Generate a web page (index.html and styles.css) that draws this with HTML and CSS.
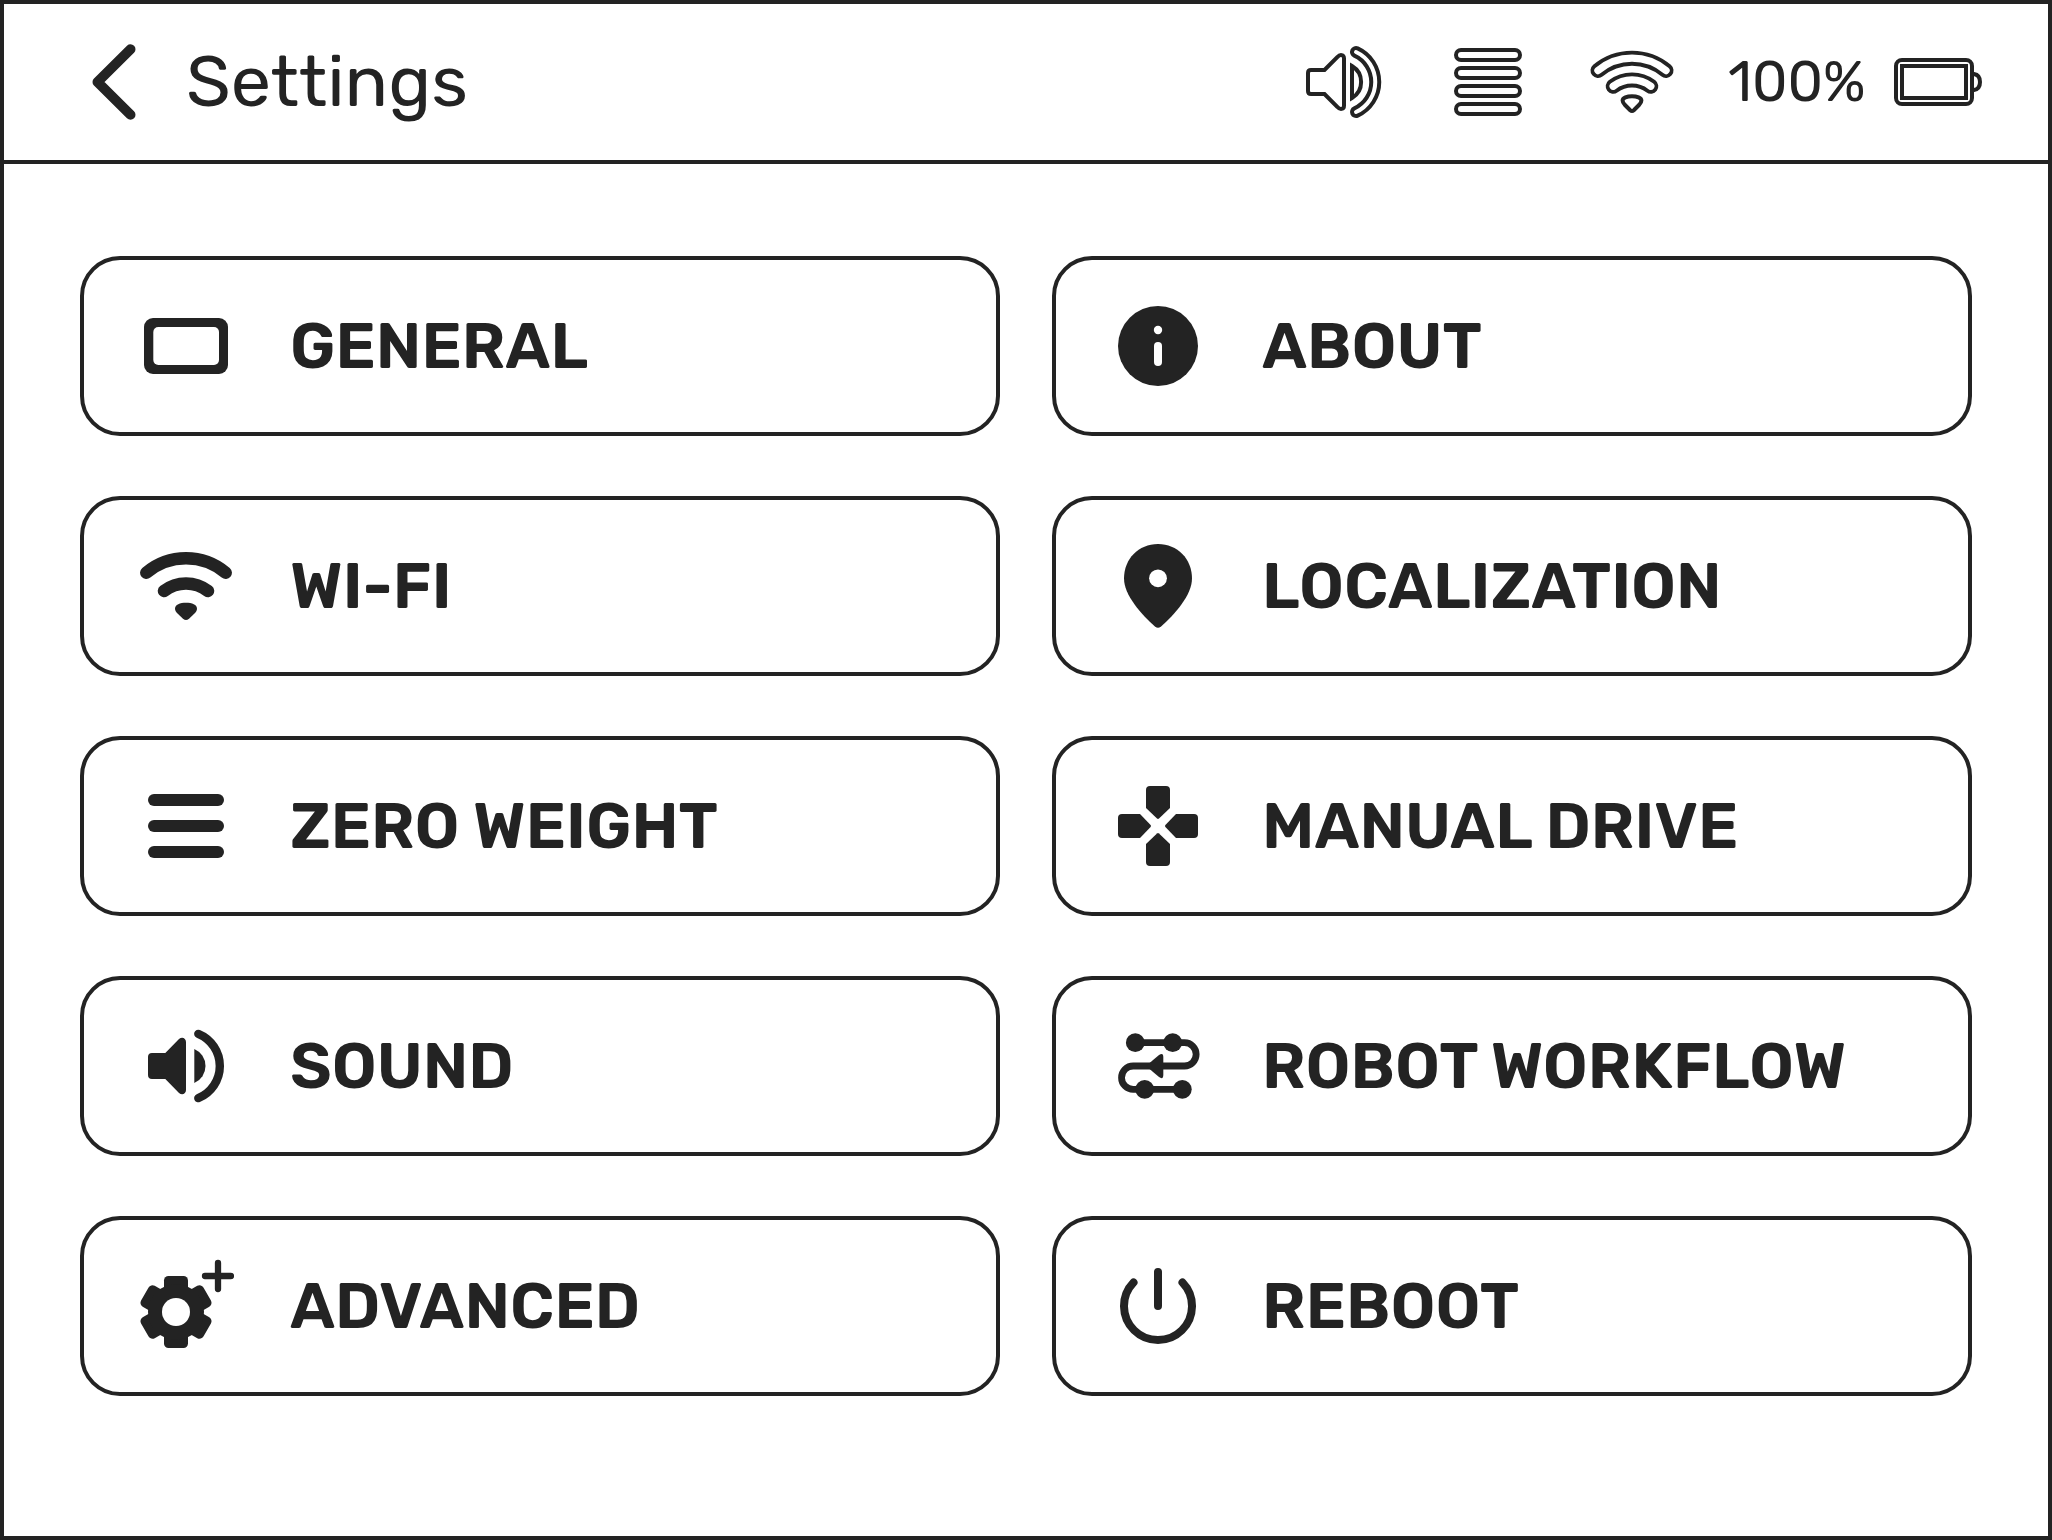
FILE: index.html
```html
<!DOCTYPE html>
<html lang="en">

<head>
  <meta charset="UTF-8">
  <meta name="viewport" content="width=device-width, initial-scale=1">
  <title>Settings</title>
  <link rel="stylesheet" href="styles.css">
</head>

<body>
  <div class="screen">
    <header class="topbar">
      <svg class="icon line back" viewBox="0 0 96 96"><path d="M64.5 15.3L31.5 48L64.5 80.7"/></svg>
      <h1>Settings</h1>

      <div class="status">
        <!-- volume -->
        <svg class="icon outline" viewBox="0 0 96 96">
          <path d="M15 36H28.5L41.5 23C44 20 48 20.500 48 24.500V71.500C48 75.500 44 76 41.500 73L28.500 60H15Q12 60 12 57V39Q12 36 15 36Z"/>
          <path d="M56 32A18.600 18.600 0 0 1 56 64Z"/>
          <path class="tube" d="M60 18A33 33 0 0 1 60 78"/>
          <path class="tube-in" d="M60 18A33 33 0 0 1 60 78"/>
        </svg>
        <!-- load -->
        <svg class="icon outline" viewBox="0 0 96 96">
          <rect x="16" y="16" width="64" height="10" rx="5"/>
          <rect x="16" y="34" width="64" height="10" rx="5"/>
          <rect x="16" y="52" width="64" height="10" rx="5"/>
          <rect x="16" y="70" width="64" height="10" rx="5"/>
        </svg>
        <!-- wifi -->
        <svg class="icon outline wifi" viewBox="0 0 96 96">
          <path class="tube" d="M14 36.500A53 53 0 0 1 82 36.500M29.200 52.200A31.200 31.200 0 0 1 66.800 52.200"/>
          <path class="tube-in" d="M14 36.500A53 53 0 0 1 82 36.500M29.200 52.200A31.200 31.200 0 0 1 66.800 52.200"/>
          <path d="M48 62.300C53 62.300 57.400 64 57.400 66.500C57.400 68.500 56.500 69.500 55 71L49.800 76.200Q48 77.800 46.200 76.200L41 71C39.500 69.500 38.600 68.500 38.600 66.500C38.600 64 43 62.300 48 62.300Z"/>
        </svg>
        <span class="percent">100%</span>
        <svg class="icon outline battery" viewBox="0 0 96 96">
          <rect x="6" y="26" width="76" height="44" rx="6"/>
          <rect x="12" y="32" width="64" height="32"/>
          <path d="M82 40H84Q90 41 90 48T84 56H82"/>
        </svg>
      </div>
    </header>

    <main class="menu">
      <button class="item general">
        <svg class="icon" viewBox="0 0 96 96"><rect x="6" y="20" width="84" height="56" rx="9"/><rect class="hole" x="15.300" y="29" width="65.700" height="38" rx="5"/></svg>
        <span>GENERAL</span>
      </button>
      <button class="item about">
        <svg class="icon" viewBox="0 0 96 96"><circle cx="48" cy="48" r="40"/><circle class="hole" cx="48" cy="32" r="4.200"/><rect class="hole" x="44" y="44" width="8" height="24" rx="4"/></svg>
        <span>ABOUT</span>
      </button>
      <button class="item wi-fi">
        <svg class="icon" viewBox="0 0 96 96">
          <path class="arc" d="M8.300 34.700A61.600 61.600 0 0 1 87.700 34.700M26 53A36 36 0 0 1 70 53"/>
          <path d="M48 64.700C54 64.700 59 66.500 59 70.500C59 72.500 58.200 73.700 57 75L51 80.800Q48 83.300 45 80.800L39 75C37.800 73.700 37 72.500 37 70.500C37 66.500 42 64.700 48 64.700Z"/>
        </svg>
        <span>WI-FI</span>
      </button>
      <button class="item localization">
        <svg class="icon" viewBox="0 0 96 96"><path d="M48 6C28.500 6 14 21 14 40.500C14 57 31 76 45.200 88.700Q48 90.800 50.800 88.700C65 76 82 57 82 40.500C82 21 67.500 6 48 6Z"/><circle class="hole" cx="48" cy="40.300" r="8.900"/></svg>
        <span>LOCALIZATION</span>
      </button>
      <button class="item zero">
        <svg class="icon" viewBox="0 0 96 96"><rect x="10" y="16" width="76" height="12" rx="6"/><rect x="10" y="42" width="76" height="12" rx="6"/><rect x="10" y="68" width="76" height="12" rx="6"/></svg>
        <span>ZERO WEIGHT</span>
      </button>
      <button class="item manual">
        <svg class="icon" viewBox="0 0 96 96">
          <path id="pad" d="M40 8H56Q60 8 60 12V30L49 40.600Q48 41.400 47 40.600L36 30V12Q36 8 40 8Z"/>
          <use href="#pad" transform="rotate(90 48 48)"/>
          <use href="#pad" transform="rotate(180 48 48)"/>
          <use href="#pad" transform="rotate(270 48 48)"/>
        </svg>
        <span>MANUAL DRIVE</span>
      </button>
      <button class="item sound">
        <svg class="icon" viewBox="0 0 96 96">
          <path d="M14 35H27.300L41 21C44 18.300 48 20 48 24V72C48 76 44 77.500 41 75L27.300 61H14Q10 61 10 57V39Q10 35 14 35Z"/>
          <path d="M56.300 31A18.500 18.500 0 0 1 56.300 65Z"/>
          <path class="wave" d="M60.300 15.900A34.700 34.700 0 0 1 60.300 80.100"/>
        </svg>
        <span>SOUND</span>
      </button>
      <button class="item workflow">
        <svg class="icon" viewBox="0 0 96 96">
          <path class="route" d="M25.300 24.700H74.500A11.650 11.650 0 0 1 74.500 48H23.200A11.650 11.650 0 0 0 23.200 71.300H72.300"/>
          <circle cx="25.300" cy="24.700" r="9.400"/><circle cx="62.700" cy="24.700" r="9.400"/>
          <circle cx="34.700" cy="71.300" r="9.400"/><circle cx="72.300" cy="71.300" r="9.400"/>
          <path d="M36 48L49 37Q53.300 34 53.300 39V57Q53.300 62 49 59Z"/>
        </svg>
        <span>ROBOT WORKFLOW</span>
      </button>
      <button class="item advanced">
        <svg class="icon" viewBox="0 0 96 96">
          <rect id="tooth" x="26" y="18" width="24" height="72" rx="4.500"/>
          <use href="#tooth" transform="rotate(60 38 54)"/>
          <use href="#tooth" transform="rotate(120 38 54)"/>
          <circle cx="38" cy="54" r="28"/>
          <circle class="hole" cx="38" cy="54" r="14"/>
          <path class="plus" d="M80 5V31M67 18H93"/>
        </svg>
        <span>ADVANCED</span>
      </button>
      <button class="item reboot">
        <svg class="icon line" viewBox="0 0 96 96"><path d="M48 14V48M23.500 24.500A34 34 0 1 0 72.500 24.500"/></svg>
        <span>REBOOT</span>
      </button>
    </main>
  </div>
</body>

</html>
```
FILE: styles.css
```css
* {
  box-sizing: border-box;
}

body {
  margin: 0;
  font-family: Rubik, Roboto, sans-serif;
  color: #232323;
  background: #fff;
}

.screen {
  width: 2052px;
  height: 1540px;
  border: 4px solid #232323;
}

.topbar {
  display: flex;
  align-items: center;
  height: 160px;
  padding: 0 62px;
  border-bottom: 4px solid #232323;
}

h1 {
  margin: 0 0 0 24px;
  font-size: 72px;
  font-weight: 400;
  line-height: 84px;
}

.status {
  display: flex;
  align-items: center;
  gap: 48px;
  margin-left: auto;
}

.percent {
  width: 162px;
  margin-right: -48px;
  font-size: 56px;
  white-space: nowrap;
}

.icon {
  display: block;
  flex: none;
  width: 96px;
  height: 96px;
  fill: #232323;
}

.hole {
  fill: #fff;
}

.line {
  fill: none;
  stroke: #232323;
  stroke-width: 8;
  stroke-linecap: round;
  stroke-linejoin: round;
}

.back {
  stroke-width: 10;
}

.outline {
  fill: none;
  stroke: #232323;
  stroke-width: 4;
}

.tube,
.tube-in {
  stroke-width: 12;
  stroke-linecap: round;
}

.tube-in {
  stroke: #fff;
  stroke-width: 4;
}

.wifi .tube {
  stroke-width: 15;
}

.wifi .tube-in {
  stroke-width: 7.4;
}

.arc,
.wave,
.route,
.plus {
  fill: none;
  stroke: #232323;
  stroke-linecap: round;
}

.arc {
  stroke-width: 12.5;
}

.wave {
  stroke-width: 8.4;
}

.route {
  stroke-width: 6.8;
}

.plus {
  stroke-width: 6.3;
}

.menu {
  display: grid;
  grid-template-columns: 920px 920px;
  gap: 60px 52px;
  padding: 92px 76px;
}

.item {
  display: flex;
  align-items: center;
  gap: 56px;
  height: 180px;
  padding: 0 54px;
  border: 4px solid #232323;
  border-radius: 40px;
  background: #fff;
  color: inherit;
  font-family: inherit;
  font-size: 64px;
  font-weight: 600;
  line-height: 76px;
  white-space: nowrap;
}
```
